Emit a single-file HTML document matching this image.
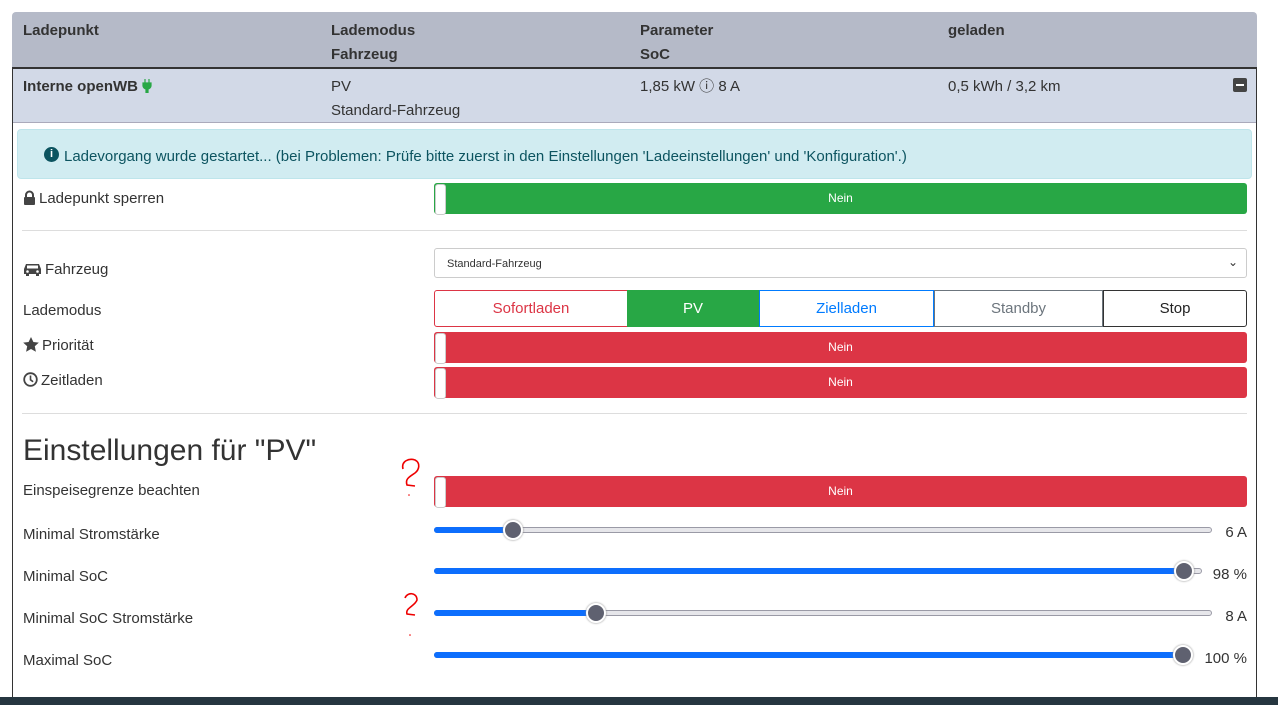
<!DOCTYPE html>
<html><head><meta charset="utf-8"><style>
*{box-sizing:border-box;margin:0;padding:0}
body{width:1278px;height:705px;background:#fff;position:relative;overflow:hidden;font-family:"Liberation Sans",sans-serif;font-size:15px;color:#333}
.a{position:absolute;white-space:nowrap;line-height:24px}
.t{margin-top:3px}
.b{font-weight:bold;color:#333}
.tog{position:absolute;left:434px;width:813px;height:31px;border-radius:3px;color:#fff;font-size:12px;text-align:center;line-height:31px}
.tog::before{content:"";position:absolute;left:1px;top:1px;width:9px;height:29px;background:#fff;border-radius:3px;border:1px solid #ccc}
.g{background:#28a745}.r{background:#dc3545}
.hr{position:absolute;left:22px;width:1225px;height:1px;background:#ddd}
.trk{position:absolute;left:434px;width:778px;height:6px;border-radius:3px;background:#e6e6ea;border:1px solid #9a9aa6}
.fill{position:absolute;left:434px;height:6px;border-radius:3px;background:#0d6efd}
.th{position:absolute;width:20px;height:20px;border-radius:50%;background:#5f6170;border:2px solid #fff;box-shadow:0 0 2px #888}
.btn{position:absolute;top:290px;height:37px;line-height:35px;text-align:center;font-size:15px;border:1px solid}
svg.i{vertical-align:-2px;margin-right:3px}
</style></head><body>
<div class="a" style="left:12px;top:12px;width:1245px;height:56px;background:#b5bac8;border-radius:4px 4px 0 0"></div>
<div class="a" style="left:12px;top:67px;width:1245px;height:631px;border:1px solid #333;border-top:2px solid #333"></div>
<div class="a" style="left:13px;top:69px;width:1243px;height:54px;background:#d2d9e7;border-bottom:1px solid #aab"></div>
<div class="a b t" style="left:23px;top:16px">Ladepunkt</div>
<div class="a b t" style="left:331px;top:16px">Lademodus<br>Fahrzeug</div>
<div class="a b t" style="left:640px;top:16px">Parameter<br>SoC</div>
<div class="a b t" style="left:948px;top:16px">geladen</div>
<div class="a b t" style="left:23px;top:72px">Interne openWB <svg width="10" height="14" style="vertical-align:-2px"><path d="M3 0v4M7 0v4M1 4h8v3a4 4 0 0 1-3 3v4H4v-4a4 4 0 0 1-3-3z" fill="#28a745" stroke="#28a745" stroke-width="1.2"/></svg></div>
<div class="a t" style="left:331px;top:72px">PV<br>Standard-Fahrzeug</div>
<div class="a t" style="left:640px;top:72px">1,85 kW ⓘ 8 A</div>
<div class="a t" style="left:948px;top:72px">0,5 kWh / 3,2 km</div>
<div class="a" style="left:1233px;top:78px;width:14px;height:14px;background:#444;border-radius:2px"><div style="position:absolute;left:3px;top:6px;width:8px;height:2px;background:#fff"></div></div>
<div class="a" style="left:17px;top:129px;width:1235px;height:50px;background:#d1ecf1;border:1px solid #bee5eb;border-radius:4px"></div>
<div class="a" style="left:44px;top:147px;width:15px;height:15px;border-radius:50%;background:#0c5460;color:#fff;font-size:11px;font-weight:bold;text-align:center;line-height:15px">i</div>
<div class="a t" style="left:64px;top:142px;color:#0c5460">Ladevorgang wurde gestartet... (bei Problemen: Prüfe bitte zuerst in den Einstellungen 'Ladeeinstellungen' und 'Konfiguration'.)</div>
<div class="a t" style="left:23px;top:184px"><svg class="i" width="13" height="15"><path d="M3 7V5a3.5 3.5 0 0 1 7 0v2" stroke="#444" stroke-width="2" fill="none"/><rect x="1" y="7" width="11" height="8" rx="1" fill="#444"/></svg>Ladepunkt sperren</div>
<div class="tog g" style="top:183px">Nein</div>
<div class="hr" style="top:230px"></div>
<div class="a t" style="left:23px;top:255px"><svg class="i" width="19" height="14"><path d="M1 7l2-5h13l2 5v5h-2v2h-3v-2H6v2H3v-2H1z" fill="#444"/><rect x="4" y="3.5" width="11" height="3" fill="#fff"/><circle cx="4.5" cy="9.5" r="1.3" fill="#fff"/><circle cx="14.5" cy="9.5" r="1.3" fill="#fff"/></svg>Fahrzeug</div>
<div class="a" style="left:434px;top:248px;width:813px;height:30px;border:1px solid #ccc;border-radius:3px;font-size:11px;padding:3px 12px;color:#333">Standard-Fahrzeug<span style="position:absolute;right:8px;top:1px;font-size:12px">&#x2304;</span></div>
<div class="a t" style="left:23px;top:296px">Lademodus</div>
<div class="btn" style="left:434px;width:194px;border-color:#dc3545;color:#dc3545;border-radius:3px 0 0 3px">Sofortladen</div>
<div class="btn" style="left:627px;width:132px;border-color:#28a745;background:#28a745;color:#fff">PV</div>
<div class="btn" style="left:759px;width:175px;border-color:#007bff;color:#007bff">Zielladen</div>
<div class="btn" style="left:934px;width:169px;border-color:#6c757d;color:#6c757d">Standby</div>
<div class="btn" style="left:1103px;width:144px;border-color:#333;color:#222;border-radius:0 3px 3px 0">Stop</div>
<div class="a t" style="left:23px;top:331px"><svg class="i" width="16" height="15"><path d="M8 0l2.4 5 5.4.6-4 3.7 1.1 5.4L8 12l-4.9 2.7 1.1-5.4-4-3.7 5.4-.6z" fill="#444"/></svg>Priorität</div>
<div class="tog r" style="top:332px">Nein</div>
<div class="a t" style="left:23px;top:366px"><svg class="i" width="15" height="15"><circle cx="7.5" cy="7.5" r="6.3" stroke="#444" stroke-width="1.8" fill="none"/><path d="M7.5 3.5v4.3l2.6 2" stroke="#444" stroke-width="1.6" fill="none"/></svg>Zeitladen</div>
<div class="tog r" style="top:367px">Nein</div>
<div class="hr" style="top:413px"></div>
<div class="a" style="left:23px;top:433px;font-size:30px;line-height:36px;color:#333">Einstellungen für "PV"</div>
<div class="a t" style="left:23px;top:476px">Einspeisegrenze beachten</div>
<div class="tog r" style="top:476px">Nein</div>
<svg class="a" style="left:395px;top:455px" width="40" height="50"><path d="M8 14 C6 6 14 3 20 5 C26 8 24 15 20 18 C14 22 10 24 12 30 L20 31" stroke="#e00" stroke-width="1.6" fill="none"/><circle cx="14" cy="40" r="0.8" fill="#e00"/></svg>
<svg class="a" style="left:395px;top:588px" width="40" height="50"><path d="M10 10 C12 4 22 4 22 12 C20 18 10 20 12 26 L20 27" stroke="#e00" stroke-width="1.6" fill="none"/><circle cx="15" cy="47" r="0.8" fill="#e00"/></svg>
<div class="a t" style="left:23px;top:520px">Minimal Stromstärke</div>
<div class="trk" style="top:527px"></div><div class="fill" style="top:527px;width:80px"></div><div class="th" style="left:503px;top:520px"></div>
<div class="a t" style="right:31px;top:518px">6 A</div>
<div class="a t" style="left:23px;top:562px">Minimal SoC</div>
<div class="trk" style="top:568px;width:768px"></div><div class="fill" style="top:568px;width:752px"></div><div class="th" style="left:1174px;top:561px"></div>
<div class="a t" style="right:31px;top:560px">98 %</div>
<div class="a t" style="left:23px;top:604px">Minimal SoC Stromstärke</div>
<div class="trk" style="top:610px"></div><div class="fill" style="top:610px;width:162px"></div><div class="th" style="left:586px;top:603px"></div>
<div class="a t" style="right:31px;top:602px">8 A</div>
<div class="a t" style="left:23px;top:646px">Maximal SoC</div>
<div class="trk" style="top:652px;width:755px"></div><div class="fill" style="top:652px;width:755px"></div><div class="th" style="left:1173px;top:645px"></div>
<div class="a t" style="right:31px;top:644px">100 %</div>
<div class="a" style="left:0;top:697px;width:1278px;height:8px;background:#263640"></div>
</body></html>
